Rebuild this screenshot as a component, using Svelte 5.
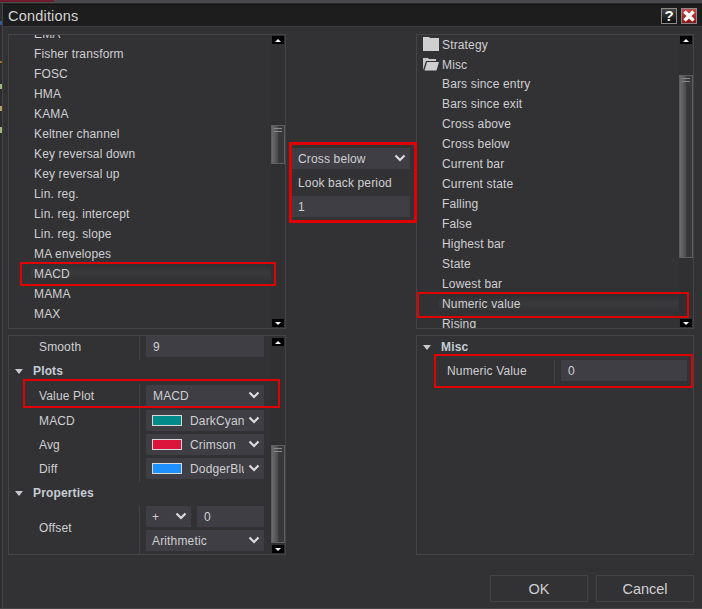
<script>
  const leftItems = ['EMA','Fisher transform','FOSC','HMA','KAMA','Keltner channel','Key reversal down','Key reversal up','Lin. reg.','Lin. reg. intercept','Lin. reg. slope','MA envelopes','MACD','MAMA','MAX'];
  const rightItems = ['Bars since entry','Bars since exit','Cross above','Cross below','Current bar','Current state','Falling','False','Highest bar','State','Lowest bar','Numeric value','Rising'];
</script>

{#snippet chevron()}
  <svg class="chev" width="12" height="8" viewBox="0 0 12 8"><path d="M1.5 1.5 L6 6 L10.5 1.5" fill="none" stroke="#dcdcdc" stroke-width="2.2"/></svg>
{/snippet}

{#snippet scrollbar(thumbTop, thumbHeight)}
  <div class="scrollbar">
    <div class="sb-btn"><span class="tri up"></span></div>
    <div class="sb-track">
      <div class="sb-thumb" style="margin-top:{thumbTop}px;height:{thumbHeight}px">
        <i></i><i></i>
      </div>
    </div>
    <div class="sb-btn"><span class="tri down"></span></div>
  </div>
{/snippet}

<div class="window">
  <span class="edge"></span>
  <span class="strip"></span>
  <header class="title">
    <span class="title-text">Conditions</span>
    <div class="title-btns">
      <button class="help">?</button>
      <button class="close" aria-label="Close">
        <svg width="14" height="14" viewBox="0 0 14 14"><path d="M2.5 2.5 L11.5 11.5 M11.5 2.5 L2.5 11.5" stroke="#fff" stroke-width="3.4"/></svg>
      </button>
    </div>
  </header>

  <main class="grid">
    <section class="panel list">
      <div class="items left">
        {#each leftItems as it}
          <div class="item" class:sel={it === 'MACD'}>{it}</div>
        {/each}
      </div>
      {@render scrollbar(81, 39)}
      <span class="red red-l"></span>
    </section>

    <section class="middle">
      <div class="mid-box">
        <div class="field select">Cross below {@render chevron()}</div>
        <div class="mid-label">Look back period</div>
        <div class="field">1</div>
      </div>
    </section>

    <section class="panel list">
      <div class="items right">
        <div class="item folder">
          <svg width="16" height="14" viewBox="0 0 16 14"><path d="M0 0 H6 L7 1 H16 V14 H0 Z" fill="#cfcfcf"/></svg>
          <span class="ft">Strategy</span>
        </div>
        <div class="item folder">
          <svg width="16" height="14" viewBox="0 0 16 14"><path d="M0 1 H5 L6 2 H13 V4 H3 L0 13 Z" fill="#c8c8c8"/><path d="M4 5 H16 L13.5 13.5 H1.5 Z" fill="#cfcfcf"/></svg>
          <span class="ft">Misc</span>
        </div>
        {#each rightItems as it}
          <div class="item" class:sel={it === 'Numeric value'}>{it}</div>
        {/each}
      </div>
      {@render scrollbar(31, 183)}
      <span class="red red-r"></span>
    </section>

    <section class="panel props">
      <div class="prop-body">
        <div class="row"><div class="label">Smooth</div><div class="val"><div class="field">9</div></div></div>
        <div class="group plots"><span class="tri-g"></span>Plots</div>
        <div class="row vp">
          <div class="label">Value Plot</div>
          <div class="val"><div class="field select">MACD {@render chevron()}</div></div>
          <span class="red red-vp"></span>
        </div>
        <div class="row"><div class="label">MACD</div><div class="val"><div class="field select color"><span class="swatch cyan"></span><span class="cname">DarkCyan</span>{@render chevron()}</div></div></div>
        <div class="row"><div class="label">Avg</div><div class="val"><div class="field select color"><span class="swatch crimson"></span><span class="cname">Crimson</span>{@render chevron()}</div></div></div>
        <div class="row"><div class="label">Diff</div><div class="val"><div class="field select color"><span class="swatch dodger"></span><span class="cname">DodgerBlue</span>{@render chevron()}</div></div></div>
        <div class="group"><span class="tri-g"></span>Properties</div>
        <div class="row offset">
          <div class="label">Offset</div>
          <div class="val stack">
            <div class="pair">
              <div class="field select op">+ {@render chevron()}</div>
              <div class="field num">0</div>
            </div>
            <div class="field select">Arithmetic {@render chevron()}</div>
          </div>
        </div>
      </div>
      {@render scrollbar(99, 98)}
    </section>

    <div class="spacer"></div>

    <section class="panel props rp">
      <div class="group"><span class="tri-g"></span>Misc</div>
      <div class="row nv">
        <div class="label">Numeric Value</div>
        <div class="val"><div class="field">0</div></div>
        <span class="red red-nv"></span>
      </div>
    </section>
  </main>

  <footer class="footer">
    <button class="btn">OK</button>
    <button class="btn">Cancel</button>
  </footer>
</div>

<style>
  :global(body) { margin: 0; background: #3a3a3c; }
  .window {
    position: relative;
    width: 702px; height: 609px; box-sizing: border-box;
    padding-top: 4px;
    background: linear-gradient(#4a4a4c 0 3px, #2a2a2c 3px 4px, #323234 4px);
    border-bottom: 1px solid #444446;
    font-family: "Liberation Sans", Arial, sans-serif;
    font-size: 12px; letter-spacing: 0.15px; color: #cfcfd2;
    overflow: hidden; display: flex; flex-direction: column;
  }
  .edge {
    position: absolute; left: 0; top: 3px; bottom: 0; width: 2px; border-right: 1px solid #444446;
    background: linear-gradient(#2c2c2e 0 18px, #2f5f9a 18px 22px, #2c2c2e 22px 58px, #b06a20 58px 60px, #2c2c2e 60px 81px, #9abb78 81px 86px, #2c2c2e 86px 103px, #b8a060 103px 108px, #2c2c2e 108px 124px, #9abb78 124px 130px, #2c2c2e 130px);
  }
  .strip { position: absolute; left: 0; top: 0; width: 54px; height: 2px; background: #6e1a2a; }
  .title {
    box-sizing: border-box;
    height: 23px; background: #1d1d1e; border-top: 1px solid #151515; border-bottom: 1px solid #3c3c3e;
    display: flex; align-items: center; justify-content: space-between;
    padding: 0 5px 0 6px; margin-left: 2px; flex: none;
  }
  .title-text { font-size: 14.5px; letter-spacing: 0.2px; color: #d4d4d4; padding-top: 1px; }
  .title-btns { display: flex; gap: 4px; }
  .title-btns button {
    box-sizing: border-box;
    width: 16px; height: 16px; padding: 0; margin: 0; display: flex; align-items: center; justify-content: center;
    font: bold 15px "Liberation Sans", sans-serif; color: #fff; border: 1px solid #8a8a8a;
  }
  .help { background: linear-gradient(#454545, #0c0c0c); }
  .close { background: linear-gradient(#c54a4a, #8c1313); }

  .grid {
    display: grid; grid-template-columns: 278px 130px 278px; grid-template-rows: 295px 220px;
    row-gap: 6px; padding: 7px 8px 0 8px; flex: none;
  }
  .panel { border: 1px solid #444446; box-sizing: border-box; position: relative; display: flex; background: #323234; }
  .items { flex: 1; overflow: hidden; min-width: 0; }
  .item { height: 20px; line-height: 20px; padding-left: 25px; white-space: nowrap; box-sizing: border-box; }
  .left .item { padding-top: 1px; }
  .left .item:first-child { margin-top: -12px; }
  .right .folder:first-child { margin-top: -1px; }
  .right .folder { display: flex; align-items: center; gap: 3px; padding-left: 6px; }
  .ft { padding-top: 2px; }
  .sel {
    background: linear-gradient(#303032, #3a3a3c 50%, #313133) content-box;
    margin: 0 0 0 22px; padding: 1px 0 1px 0 !important; line-height: 18px; text-indent: 3px;
  }
  .left .sel { line-height: 20px; }

  .red { position: absolute; border: 2px solid #e00000; box-sizing: border-box; pointer-events: none; z-index: 3; }
  .red-l { left: 11px; top: 227px; width: 256px; height: 24px; }
  .red-r { left: 0; top: 257px; width: 272px; height: 26px; }
  .red-vp { left: 14px; top: -5px; width: 257px; height: 29px; }
  .red-nv { left: 17px; right: 0; top: -6px; bottom: -4px; }

  .scrollbar { width: 14px; flex: none; display: flex; flex-direction: column; align-items: center; padding: 1px 0; box-sizing: border-box; background: #303032; }
  .props .scrollbar { padding-top: 2px; }
  .sb-btn { width: 12px; height: 8px; background: #000; display: flex; align-items: center; justify-content: center; flex: none; }
  .tri { width: 0; height: 0; border-left: 3px solid transparent; border-right: 3px solid transparent; }
  .tri.up { border-bottom: 3px solid #fff; }
  .tri.down { border-top: 3px solid #fff; }
  .sb-track { flex: 1; width: 100%; display: flex; flex-direction: column; }
  .sb-thumb {
    width: 14px; box-sizing: border-box; border: 1px solid #5e5e60; padding-top: 2px;
    background: linear-gradient(90deg, #6c6c6e, #4a4a4c 50%, #383839 55%);
    display: flex; flex-direction: column; align-items: center; gap: 2px;
  }
  .sb-thumb i { display: block; width: 8px; height: 1px; background: #8a8a8c; }

  .middle { position: relative; z-index: 2; }
  .mid-box {
    box-sizing: border-box; width: 128px; height: 81px; margin: 108px 0 0 3px;
    border: 3px solid #e00000; padding: 3px 4px 3px 0; display: flex; flex-direction: column;
  }
  .mid-label { height: 27px; line-height: 29px; padding-left: 6px; flex: none; }
  .mid-box .field { padding-left: 6px; }
  .field {
    background: #3e3e44; height: 21px; line-height: 23px; padding-left: 7px; position: relative;
    box-sizing: border-box; white-space: nowrap; flex: none;
  }
  .chev { position: absolute; right: 4px; top: 6px; }

  .prop-body { flex: 1; min-width: 0; }
  .row { display: flex; height: 24px; position: relative; }
  .label { width: 131px; flex: none; box-sizing: border-box; padding-left: 30px; border-right: 1px solid #434345; line-height: 23px; }
  .val { flex: 1; padding: 0 7px 0 6px; min-width: 0; box-sizing: border-box; }
  .group { height: 24px; line-height: 22px; font-weight: bold; color: #c4ccd4; padding-left: 24px; position: relative; }
  .plots { line-height: 22px; }
  .tri-g { position: absolute; left: 6px; top: 9px; width: 0; height: 0; border-left: 4.5px solid transparent; border-right: 4.5px solid transparent; border-top: 5px solid #c8c8c8; }
  .vp { height: 26px; }
  .vp .val, .vp .label { padding-top: 1px; }
  .color { padding-left: 6px; display: flex; align-items: center; overflow: hidden; }
  .swatch { width: 30px; height: 11px; border: 1px solid #d8d8d8; flex: none; margin-right: 8px; box-sizing: border-box; }
  .cyan { background: #008b8b; } .crimson { background: #dc143c; } .dodger { background: #1e90ff; }
  .cname { width: 54px; overflow: hidden; flex: none; padding-top: 2px; line-height: 19px; }
  .offset { height: 49px; }
  .offset .label { line-height: 44px; }
  .stack { display: flex; flex-direction: column; gap: 3px; }
  .stack .select { padding-left: 6px; }
  .pair { display: flex; gap: 6px; }
  .op { width: 45px; }
  .num { flex: 1; }
  .rp { display: block; }
  .nv .label { width: 138px; }
  .nv .val { padding-right: 6px; }

  .footer { display: flex; justify-content: flex-end; gap: 8px; padding: 20px 8px 0 0; }
  .btn {
    box-sizing: border-box;
    width: 98px; height: 27px; padding: 0; background: #323234; border: 1px solid #444446; color: #cfcfd2;
    font: 14.5px "Liberation Sans", sans-serif;
  }
</style>
